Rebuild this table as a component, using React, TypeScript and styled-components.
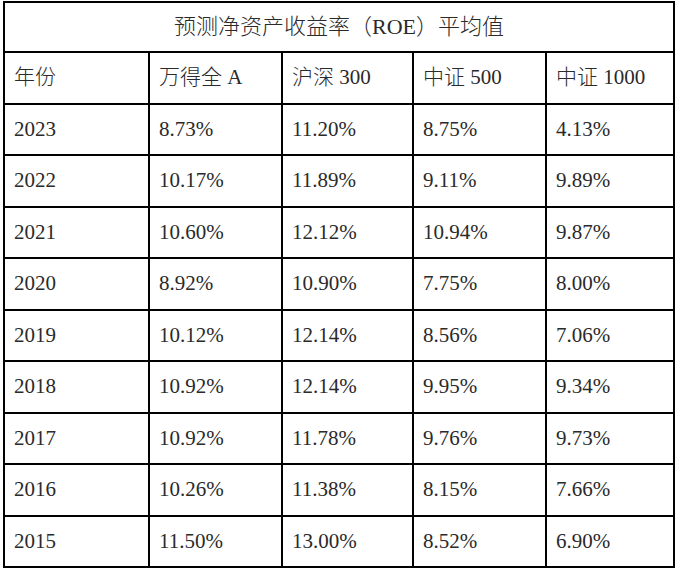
import { createGlobalStyle, styled } from "styled-components";

const GlobalStyle = createGlobalStyle`
  html, body {
    margin: 0;
    padding: 0;
    background: #ffffff;
  }
`;

const headers = ["年份", "万得全 A", "沪深 300", "中证 500", "中证 1000"];

const rows: string[][] = [
  ["2023", "8.73%", "11.20%", "8.75%", "4.13%"],
  ["2022", "10.17%", "11.89%", "9.11%", "9.89%"],
  ["2021", "10.60%", "12.12%", "10.94%", "9.87%"],
  ["2020", "8.92%", "10.90%", "7.75%", "8.00%"],
  ["2019", "10.12%", "12.14%", "8.56%", "7.06%"],
  ["2018", "10.92%", "12.14%", "9.95%", "9.34%"],
  ["2017", "10.92%", "11.78%", "9.76%", "9.73%"],
  ["2016", "10.26%", "11.38%", "8.15%", "7.66%"],
  ["2015", "11.50%", "13.00%", "8.52%", "6.90%"],
];

const colWidths = [145, 133, 131, 133, 128];

const App = () => {
  return (
    <Page>
      <GlobalStyle />
      <RoeTable>
        <colgroup>
          {colWidths.map((w, i) => (
            <col key={i} style={{ width: w }} />
          ))}
        </colgroup>
        <thead>
          <Row $title>
            <TitleCell colSpan={5}>预测净资产收益率（ROE）平均值</TitleCell>
          </Row>
          <Row>
            {headers.map(h => (
              <Cell as="th" key={h}>
                {h}
              </Cell>
            ))}
          </Row>
        </thead>
        <tbody>
          {rows.map(r => (
            <Row key={r[0]}>
              {r.map((v, i) => (
                <Cell key={i}>{v}</Cell>
              ))}
            </Row>
          ))}
        </tbody>
      </RoeTable>
    </Page>
  );
};

const Page = styled.div`
  padding: 1px 4px 0 3px;
  font-family: "Liberation Serif", "Noto Sans CJK SC", serif;
  color: #2a2a2a;
`;

const RoeTable = styled.table`
  border-collapse: collapse;
  table-layout: fixed;
  width: 670px;
  border: 2px solid #000000;
`;

const Row = styled.tr<{ $title?: boolean }>`
  height: ${p => (p.$title ? "50px" : "51.5px")};
`;

const Cell = styled.td`
  border: 2px solid #000000;
  padding: 0 0 0 9px;
  font-size: 21px;
  font-weight: 300;
  text-align: left;
  vertical-align: middle;
  white-space: nowrap;
  line-height: 1;
`;

const TitleCell = styled.th`
  border: 2px solid #000000;
  padding: 0;
  font-size: 22px;
  font-weight: 300;
  text-align: center;
  vertical-align: middle;
  line-height: 1;
`;

export default App;
